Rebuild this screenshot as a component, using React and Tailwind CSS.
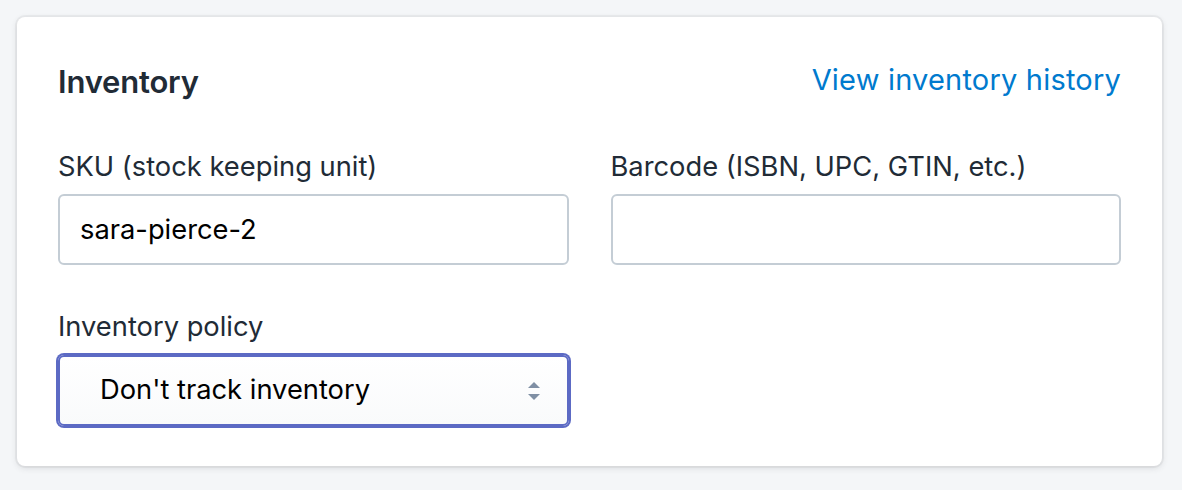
import React from 'react'

const InventoryCard = () => {
  return (
    <div className="min-h-[490px] bg-[#f4f6f8] pl-[17px] pr-[20px] pt-[17px] font-['Inter',sans-serif] text-[#212b36]">
      <div className="rounded-[8px] bg-white px-[41px] pt-[41px] pb-[40px] shadow-[0_0_0_2px_rgba(63,63,68,0.05),0_2px_6px_0_rgba(63,63,68,0.15)]">
        <div className="flex h-[48px] items-center justify-between">
          <h2 className="text-[31px] font-semibold tracking-[-0.2px]">Inventory</h2>
          <a href="#" className="-mt-[5px] text-[29px] tracking-[0.2px] text-[#007ace]">View inventory history</a>
        </div>

        <div className="mt-[41px] grid grid-cols-2 gap-x-[42px]">
          <label className="block">
            <div className="text-[27.3px] leading-[40px]">SKU (stock keeping unit)</div>
            <input
              defaultValue="sara-pierce-2"
              className="mt-[7px] h-[71px] w-full rounded-[6px] border-2 border-[#c4cdd5] px-[20px] text-[27.3px] text-black outline-none"
            />
          </label>
          <label className="block">
            <div className="text-[27.3px] leading-[40px]">Barcode (ISBN, UPC, GTIN, etc.)</div>
            <input className="mt-[7px] h-[71px] w-full rounded-[6px] border-2 border-[#c4cdd5] px-[20px] text-[27.3px] outline-none" />
          </label>

          <div className="mt-[42px]">
            <div className="text-[27.3px] leading-[40px]">Inventory policy</div>
            <div className="relative mt-[8px] flex h-[71px] items-center rounded-[6px] border-2 border-[#5c6ac4] bg-gradient-to-b from-white to-[#f9fafb] pl-[40px] shadow-[0_0_0_2px_#5c6ac4]">
              <span className="text-[27.3px] text-black">Don't track inventory</span>
              <svg className="absolute right-[26px] top-1/2 -translate-y-1/2" width="14" height="20" viewBox="0 0 14 20">
                <path d="M7 1 L13 7 H1 Z" fill="#7f8fa4" />
                <path d="M7 19 L13 13 H1 Z" fill="#7f8fa4" />
              </svg>
            </div>
          </div>
        </div>
      </div>
    </div>
  )
}

export default function App() {
  return <InventoryCard />
}
